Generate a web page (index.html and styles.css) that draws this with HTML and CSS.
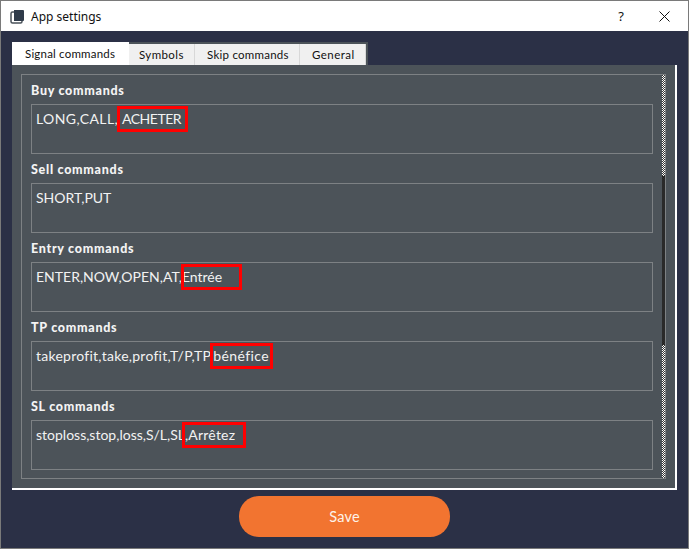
FILE: index.html
```html
<!DOCTYPE html>
<html lang="en">
<head>
<meta charset="utf-8">
<title>App settings</title>
<link rel="stylesheet" href="styles.css">
</head>
<body>
<div class="window">
  <header class="titlebar">
    <svg class="app-icon" width="15" height="15" viewBox="0 0 15 15"><rect x="1" y="3" width="11" height="11" rx="1.5" fill="#fff" stroke="#4a525a" stroke-width="1.5"/><path d="M4 1h9a1 1 0 0 1 1 1v9a1 1 0 0 1-1 1H4z" fill="#2f3b4a"/></svg>
    <span class="title">App settings</span>
    <span class="help">?</span>
    <svg class="close" width="11" height="11" viewBox="0 0 11 11"><path d="M.5.5l10 10M10.5.5l-10 10" stroke="#111" stroke-width="1" fill="none"/></svg>
  </header>
  <main class="content">
    <nav class="tabs">
      <span class="tab active">Signal commands</span>
      <span class="tab">Symbols</span>
      <span class="tab">Skip commands</span>
      <span class="tab">General</span>
    </nav>
    <section class="pane">
      <div class="scrollbox">
        <div class="group">
          <h3>Buy commands</h3>
          <div class="field"><span class="t-wide">LONG,CALL, </span><span class="t-tight">ACHETER</span><i class="mark m1"></i></div>
        </div>
        <div class="group">
          <h3>Sell commands</h3>
          <div class="field">SHORT,PUT</div>
        </div>
        <div class="group">
          <h3>Entry commands</h3>
          <div class="field">ENTER,NOW,OPEN,AT,Entrée<i class="mark m2"></i></div>
        </div>
        <div class="group">
          <h3>TP commands</h3>
          <div class="field"><span class="t-open">takeprofit,take,profit,T/P,TP,</span><span class="t-wide">bénéfice</span><i class="mark m3"></i></div>
        </div>
        <div class="group">
          <h3>SL commands</h3>
          <div class="field">stoploss,stop,loss,S/L,SL,<span class="t-open">Arrêtez</span><i class="mark m4"></i></div>
        </div>
        <div class="scrollbar"><div class="thumb"></div></div>
      </div>
    </section>
    <div class="actions"><button class="save">Save</button></div>
  </main>
</div>
</body>
</html>
```
FILE: styles.css
```css
* { box-sizing: border-box; }
html, body { margin: 0; height: 100%; }
body { font-family: "Lato", "Liberation Sans", sans-serif; background: #2b3046; }
.window {
  width: 689px; height: 549px;
  border: 1px solid #7a7a7a;
  display: flex; flex-direction: column;
  background: #2b3046;
}
.titlebar {
  height: 30px; flex: none; background: #fff;
  display: flex; align-items: center;
  padding: 0 0 0 9px;
  font-family: "Noto Sans", sans-serif; font-size: 12px; color: #111;
}
.app-icon { flex: none; }
.title { margin-left: 6px; }
.help { margin-left: auto; font-size: 13px; margin-right: 35px; }
.close { margin-right: 18px; }
.content { flex: 1; padding: 11px 11px 0 11px; display: flex; flex-direction: column; }
.tabs { display: flex; height: 23px; align-items: flex-end; background: #4c5359; width: 356px; }
.tab {
  height: 21px; background: #f0f0f0; color: #111;
  font-size: 11.5px; letter-spacing: .3px;
  padding: 4px 0 0 12px;
  border-right: 1px solid #d8d8d8;
  white-space: nowrap;
}
.tab.active { height: 23px; width: 117px; background: #fff; padding: 5px 0 0 13px; border-right: 0; letter-spacing: .2px; }
.tab:nth-child(2) { width: 66px; padding-left: 10px; letter-spacing: .4px; }
.tab:nth-child(3) { width: 105px; letter-spacing: .25px; }
.tab:nth-child(4) { width: 66px; letter-spacing: .45px; }
.pane {
  width: 665px; height: 425px; background: #4c5359;
  border-right: 2px solid #fff; border-bottom: 2px solid #fff;
  padding: 9px 0 0 9px;
}
.scrollbox {
  position: relative;
  width: 645px; height: 405px;
  border: 1px solid #7d8184;
  padding: 0 12px 0 9px;
  overflow: hidden;
}
.group { height: 79px; }
.group h3 {
  margin: 0; height: 29px; padding-top: 7px;
  font-size: 12.5px; line-height: 18px; font-weight: 900; letter-spacing: .72px; color: #f4f4f4;
}
.field {
  position: relative;
  height: 50px; border: 1px solid #7d8184;
  padding: 5px 0 0 4px;
  font-size: 14px; line-height: 18px; color: #f2f2f2;
  white-space: pre;
}
.t-wide { letter-spacing: .4px; }
.t-tight { letter-spacing: -.5px; }
.t-open { letter-spacing: .25px; }
.mark { position: absolute; top: 1px; height: 26px; border: 3px solid #f00; }
.m1 { left: 85px; width: 71px; }
.m2 { left: 149px; width: 61px; }
.m3 { left: 178px; width: 63px; }
.m4 { left: 150px; width: 64px; }
.scrollbar {
  position: absolute; top: 0; right: 0; bottom: 0; width: 3px;
  background: repeating-conic-gradient(#fff 0 25%, #333 0 50%) 0 0 / 2px 2px;
}
.thumb { position: absolute; top: 101px; left: 0; right: 0; height: 169px; background: #2a2a2a; }
.actions { display: flex; justify-content: center; padding: 6px 0 0 0; }
.save {
  width: 211px; height: 41px; border: 0; border-radius: 20px;
  background: #f27430; color: #fdf3ea;
  font-family: "Lato", sans-serif; font-size: 14.5px; letter-spacing: .2px;
}
```
